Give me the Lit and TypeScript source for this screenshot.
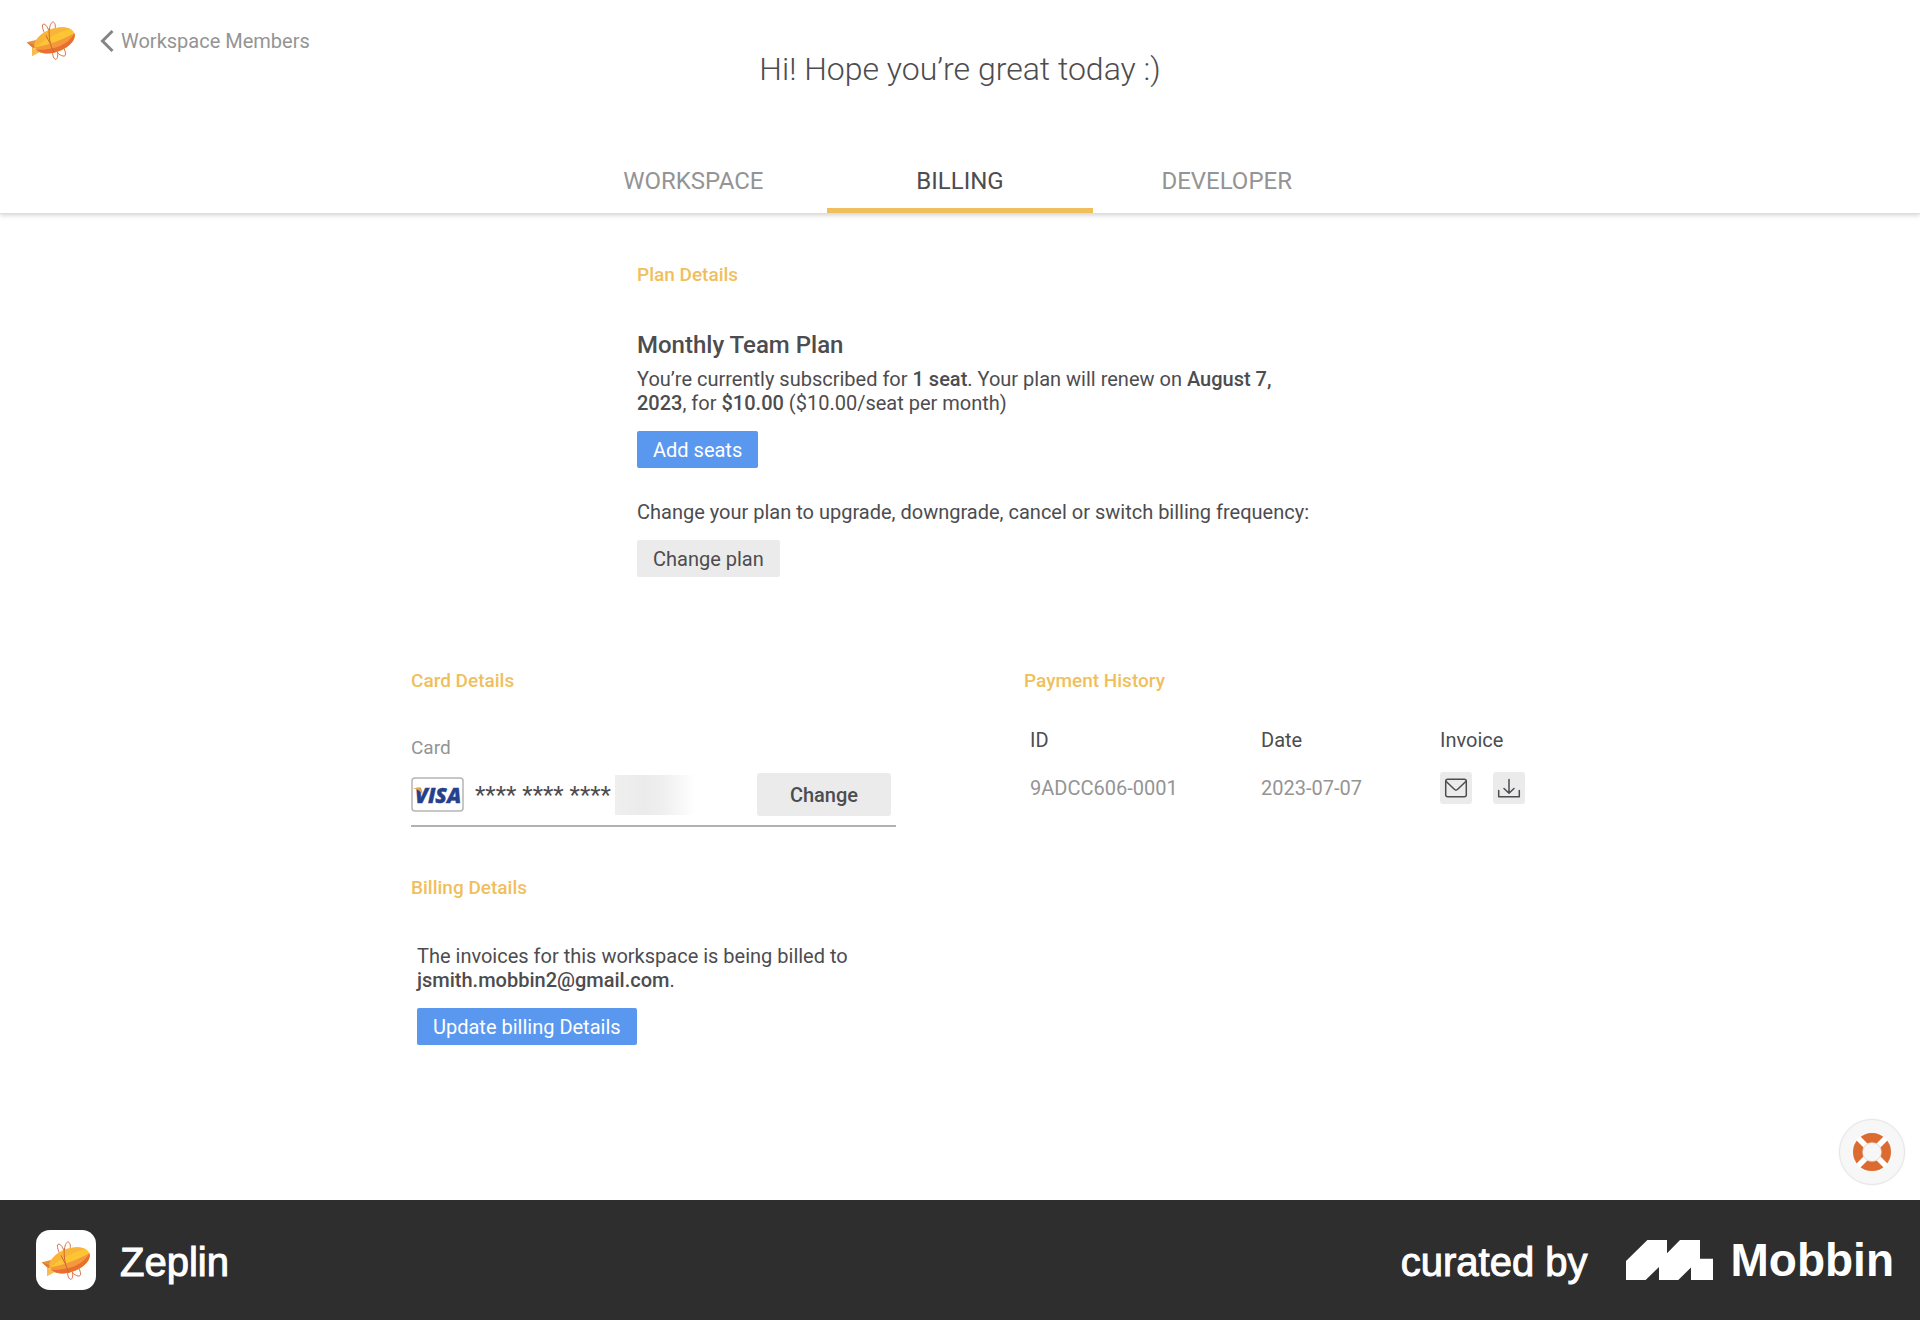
import { LitElement, html, css } from "lit";
import { customElement, property, state } from "lit/decorators.js";

@customElement("zeppelin-logo")
class ZeppelinLogo extends LitElement {
  static styles = css`
    :host { display: block; }
    .art { display: block; width: 50px; height: 41px; }
  `;
  render() {
    return html`<svg class="art" viewBox="78 60 150 123" aria-hidden="true">
      <path d="M80 127 L108 120 L112 142 L99 145 Z" fill="#e8913f" />
      <path d="M96 142 L124 154 L96 169 Z" fill="#f9bb4c" />
      <path d="M80 127 L99 143 L112 138 Z" fill="#dd7a35" />
      <g fill="none" stroke="#dd7048" stroke-width="3">
        <path d="M142 116 C130 96 124 76 129 73 C136 69 146 84 149 104" />
        <path d="M148 96 C148 76 155 64 160 66 C168 70 167 84 163 100" />
        <path d="M160 140 C154 158 160 178 167 178 C174 178 174 162 172 150" />
        <path d="M162 146 C172 162 190 172 195 167 C199 162 196 154 190 142" />
      </g>
      <g transform="translate(164 121) rotate(-20)">
        <ellipse rx="63" ry="35" fill="#fdc534" />
        <path d="M-63 0 A63 35 0 0 1 56 -16 Q0 -22 -63 0 Z" fill="#f9b53a" />
        <path d="M-63 0 A63 35 0 0 0 63 0 Q0 10 -63 0 Z" fill="#f3993b" />
        <path d="M-61 8 A63 35 0 0 0 63 0 Q20 38 -61 8 Z" fill="#e96f30" />
      </g>
      <path d="M148 84 C146 112 150 136 162 158 M138 106 L150 130" fill="none" stroke="#cd6830" stroke-width="3" />
    </svg>`;
  }
}

@customElement("help-button")
class HelpButton extends LitElement {
  static styles = css`
    :host { display: block; }
    .help {
      display: grid; place-items: center; box-sizing: border-box;
      width: 66px; height: 66px; padding: 0; cursor: pointer;
      border: 1px solid #e6e6e6; border-radius: 50%; background: #f7f7f7;
      box-shadow: 0 0 2px rgba(0, 0, 0, 0.08);
    }
    .ring { width: 38px; height: 38px; }
  `;
  render() {
    return html`<button class="help" type="button" aria-label="Help">
      <svg class="ring" viewBox="0 0 38 38" aria-hidden="true">
        <circle cx="19" cy="19" r="14" fill="none" stroke="#db6b30" stroke-width="10" />
        <path d="M5 5 L13 13 M25 25 L33 33 M33 5 L25 13 M13 25 L5 33" stroke="#fff" stroke-width="5.500" />
        <circle cx="19" cy="19" r="9.500" fill="#f7f7f7" stroke="#e3c2b0" stroke-width="0.600" />
      </svg>
    </button>`;
  }
}

interface Payment { id: string; date: string; }

@customElement("payment-history")
class PaymentHistory extends LitElement {
  @property({ attribute: false }) payments: Payment[] = [];
  static styles = css`
    :host { display: block; }
    .payments { width: 100%; border-collapse: collapse; table-layout: fixed; color: #949494; font-size: 20px; line-height: 24px; }
    .payments th { padding: 0 0 20px 6px; color: #4d4c4f; font-weight: 400; text-align: left; }
    .payments td { padding: 0 0 0 6px; }
    .col-date { width: 179px; }
    .col-invoice { width: 91px; }
    .actions { display: flex; gap: 21px; }
    .action { display: grid; place-items: center; width: 32px; height: 32px; padding: 0; border: 0; border-radius: 3px; background: #ebebeb; cursor: pointer; }
    .glyph { width: 24px; height: 24px; fill: none; stroke: #4d4c4f; stroke-width: 1.5; stroke-linecap: round; stroke-linejoin: round; }
  `;
  render() {
    return html`<table class="payments">
      <colgroup><col /><col class="col-date" /><col class="col-invoice" /></colgroup>
      <thead><tr><th scope="col">ID</th><th scope="col">Date</th><th scope="col">Invoice</th></tr></thead>
      <tbody>${this.payments.map((p) => html`<tr>
        <td>${p.id}</td><td>${p.date}</td>
        <td><div class="actions">
          <button class="action" type="button" aria-label="Email invoice">
            <svg class="glyph" viewBox="0 0 24 24"><rect x="1.7" y="3.2" width="20.6" height="17.6" rx="2" /><path d="M2.2 5.500 L10.6 13.500 Q12 14.700 13.4 13.500 L21.8 5.500" /></svg>
          </button>
          <button class="action" type="button" aria-label="Download invoice">
            <svg class="glyph" viewBox="0 0 24 24"><path d="M12 3.5 V17 M7 12.500 L12 17.200 L17 12.500 M1.7 14.5 V20.8 H22.3 V14.5" /></svg>
          </button>
        </div></td>
      </tr>`)}</tbody>
    </table>`;
  }
}

@customElement("app-root")
class AppRoot extends LitElement {
  @state() private active = "BILLING";
  private tabs = ["WORKSPACE", "BILLING", "DEVELOPER"];
  private payments: Payment[] = [{ id: "9ADCC606-0001", date: "2023-07-07" }];

  static styles = css`
    :host {
      display: flex; flex-direction: column; min-height: 100vh; position: relative;
      background: #fff; color: #4d4c4f;
      font-family: Roboto, "Liberation Sans", sans-serif; font-size: 20px; line-height: 24px;
    }
    h1, h2, h3, p { margin: 0; }
    button { font-family: inherit; font-size: 20px; line-height: 24px; cursor: pointer; }
    .header { border-bottom: 1px solid #dedede; box-shadow: 0 1px 5px rgba(0, 0, 0, 0.2); }
    .top { display: grid; grid-template-columns: 1fr auto 1fr; }
    .crumbs { display: flex; align-items: center; align-self: start; gap: 24px; padding: 20px 0 0 26px; }
    .back { display: flex; align-items: center; gap: 7px; color: #949494; text-decoration: none; }
    .chevron { width: 14px; height: 24px; fill: none; stroke: #858585; stroke-width: 3; }
    .greeting { padding-top: 49px; font-size: 32px; line-height: 40px; font-weight: 300; }
    .tabs { display: flex; max-width: 800px; margin: 59px auto 0; }
    .tab { flex: 1; height: 65px; padding: 6px 0 0; border: 0; border-bottom: 5px solid transparent; background: none; color: #949494; font-size: 24px; }
    .tab.on { color: #4d4c4f; border-color: #f0bf5c; }
    .main { flex: 1; box-sizing: border-box; width: 100%; max-width: 1130px; margin: 0 auto; padding: 49px 0 40px 16px; }
    .title { color: #f0bf5c; font-size: 19px; line-height: 24px; font-weight: 500; }
    .plan { max-width: 680px; padding-left: 226px; }
    .plan-name { margin-top: 43px; font-size: 24px; line-height: 30px; font-weight: 500; }
    .plan-text { margin: 7px 0 16px; }
    .plan-change { margin: 32px 0 16px; }
    b { font-weight: 500; }
    .button { height: 37px; padding: 0 16px; border: 0; border-radius: 2px; background: #ebebeb; color: #4d4c4f; }
    .button.primary { background: #5a98f0; color: #fff; }
    .columns { display: grid; grid-template-columns: 485px 1fr; column-gap: 128px; margin-top: 92px; }
    .label { display: block; margin-top: 43px; color: #949494; font-size: 19px; }
    .card { display: flex; align-items: center; margin-top: 13px; padding: 0 5px 9px 0; border-bottom: 2px solid #b2b2b2; }
    .visa { width: 53px; height: 35px; }
    .digits { margin-left: 11px; font-size: 24px; }
    .hidden-digits { width: 80px; height: 40px; margin-left: 4px; background: linear-gradient(90deg, #efefef, #ebebeb 35%, #efefef 60%, #fff); }
    .change { width: 134px; height: 43px; margin-left: auto; border: 0; border-radius: 3px; background: #ebebeb; color: #4d4c4f; font-weight: 500; }
    .billing { margin-top: 49px; }
    .billing-body { padding: 44px 0 0 6px; }
    .billing-text { margin-bottom: 16px; }
    .history { margin-top: 35px; }
    .help { position: absolute; right: 15px; bottom: 135px; }
    .footer { display: flex; align-items: center; height: 120px; padding: 0 26px 0 36px; background: #2e2e2e; color: #fff; font-family: "Liberation Sans", sans-serif; font-size: 40px; line-height: 48px; }
    .app-icon { display: grid; place-items: center; width: 60px; height: 60px; margin-right: 24px; border-radius: 14px; background: #fff; }
    .app-name, .credit { padding-top: 4px; -webkit-text-stroke: 1px #fff; }
    .credit { margin-left: auto; }
    .mobbin { display: flex; align-items: center; gap: 18px; margin-left: 38px; font-size: 46px; font-weight: 700; }
    .mark { width: 87px; height: 40px; fill: #fff; }
  `;

  private visa() {
    return html`<svg class="visa" viewBox="0 0 53 35" role="img" aria-label="Visa">
      <rect x="1" y="1" width="51" height="33" rx="3" fill="#fff" stroke="#b5b5b5" stroke-width="1.5" />
      <text x="4" y="25.5" font-family="Open Sans, sans-serif" font-size="21" font-weight="800" font-style="italic" fill="#27408b" stroke="#27408b" stroke-width="0.4">VISA</text>
      <path d="M2.5 11 H8.5 Q10.5 11 11 13 L12 18 Q9 12.500 2.500 11.500 Z" fill="#e9a840" />
    </svg>`;
  }

  render() {
    return html`
      <header class="header">
        <div class="top">
          <nav class="crumbs">
            <zeppelin-logo></zeppelin-logo>
            <a class="back" href="#members">
              <svg class="chevron" viewBox="0 0 14 24" aria-hidden="true"><path d="M12.500 2 L2.500 12 L12.500 22" /></svg>
              Workspace Members
            </a>
          </nav>
          <h1 class="greeting">Hi! Hope you’re great today :)</h1>
        </div>
        <div class="tabs" role="tablist">
          ${this.tabs.map((t) => html`<button type="button" role="tab" aria-selected=${t === this.active}
            class="tab ${t === this.active ? "on" : ""}" @click=${() => (this.active = t)}>${t}</button>`)}
        </div>
      </header>
      <main class="main">
        <section class="plan">
          <h2 class="title">Plan Details</h2>
          <h3 class="plan-name">Monthly Team Plan</h3>
          <p class="plan-text">You’re currently subscribed for <b>1 seat</b>. Your plan will renew on <b>August 7, 2023</b>, for <b>$10.00</b> ($10.00/seat per month)</p>
          <button class="button primary" type="button">Add seats</button>
          <p class="plan-change">Change your plan to upgrade, downgrade, cancel or switch billing frequency:</p>
          <button class="button" type="button">Change plan</button>
        </section>
        <div class="columns">
          <div>
            <section>
              <h2 class="title">Card Details</h2>
              <span class="label">Card</span>
              <div class="card">
                ${this.visa()}
                <span class="digits">**** **** ****</span>
                <span class="hidden-digits"></span>
                <button class="change" type="button">Change</button>
              </div>
            </section>
            <section class="billing">
              <h2 class="title">Billing Details</h2>
              <div class="billing-body">
                <p class="billing-text">The invoices for this workspace is being billed to <b>jsmith.mobbin2@gmail.com</b>.</p>
                <button class="button primary" type="button">Update billing Details</button>
              </div>
            </section>
          </div>
          <section>
            <h2 class="title">Payment History</h2>
            <payment-history class="history" .payments=${this.payments}></payment-history>
          </section>
        </div>
      </main>
      <help-button class="help"></help-button>
      <footer class="footer">
        <span class="app-icon"><zeppelin-logo></zeppelin-logo></span>
        <span class="app-name">Zeplin</span>
        <span class="credit">curated by</span>
        <span class="mobbin">
          <svg class="mark" viewBox="0 0 87 40" aria-hidden="true"><path d="M0 21 L21.400 0 H41 V13.300 L54 0 H74 V18.700 H87 V40 H65 V27.500 L52.300 40 H33 V27 L19.600 40 H0 Z" /></svg>
          Mobbin
        </span>
      </footer>
    `;
  }
}
